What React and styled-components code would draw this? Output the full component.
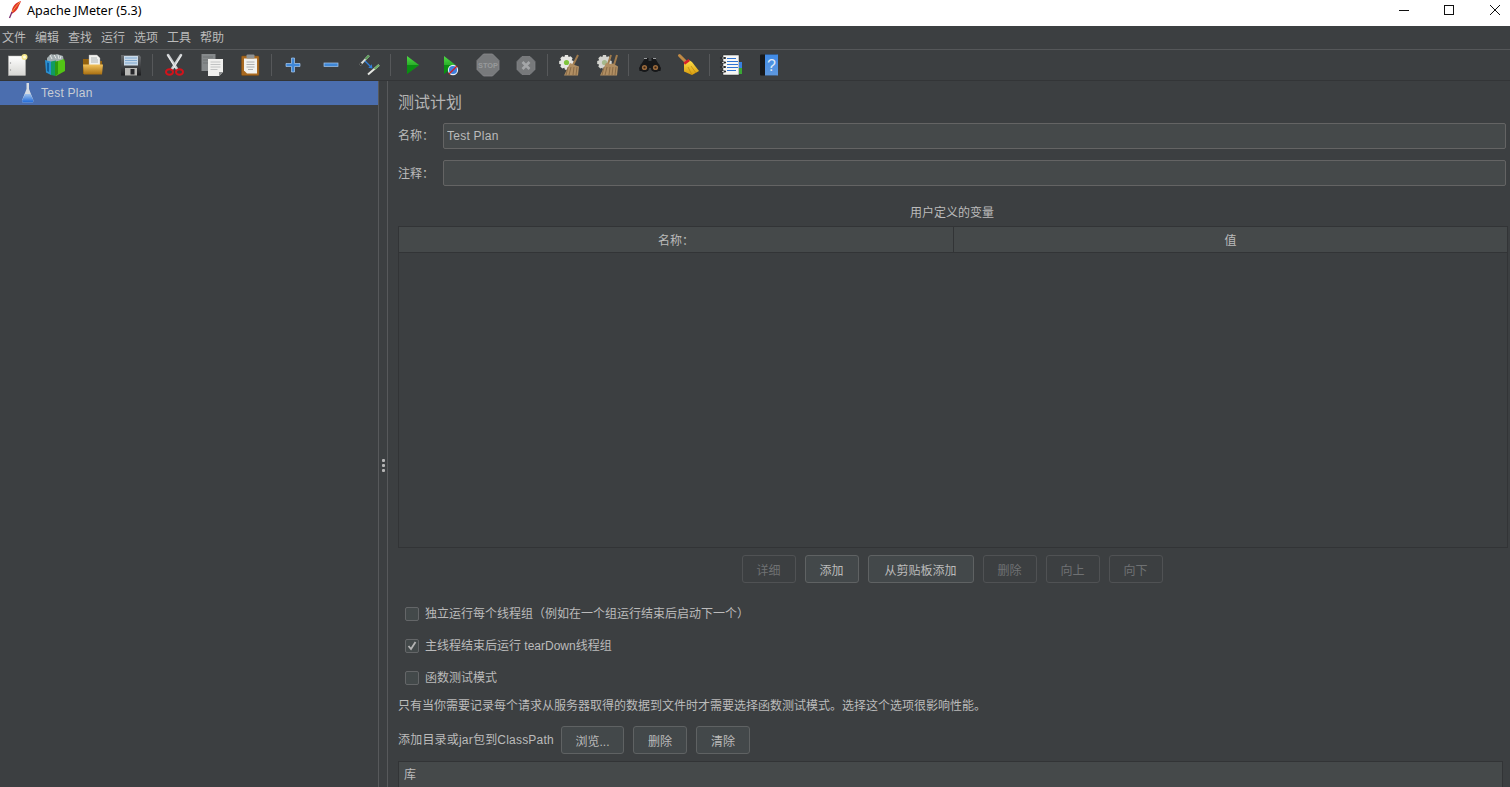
import React from "react";
import styled, { createGlobalStyle } from "styled-components";

const Global = createGlobalStyle`
  html, body { margin: 0; padding: 0; background: #3c3f41; overflow: hidden; }
  * { box-sizing: border-box; }
`;

const FONT = `"Liberation Sans", "Noto Sans CJK SC", sans-serif`;

const Frame = styled.div`
  width: 1510px; height: 787px; overflow: hidden;
  display: flex; flex-direction: column;
  background: #3c3f41; color: #bbbbbb;
  font: 12px/16px ${FONT};
`;
const TitleBar = styled.header`
  height: 26px; flex: none; background: #fff; color: #000;
  display: flex; align-items: center; padding: 0 10px 0 8px;
`;
const AppTitle = styled.span`
  font: 12.6px/16px "Noto Sans", sans-serif; margin-left: 5px; flex: 1; margin-top: -4px;
`;
const WindowControls = styled.div`
  display: flex; gap: 35px; margin-top: -6px;
  svg { display: block; }
  svg:nth-child(2) { margin-right: 1px; }
`;
const MenuBar = styled.nav`
  height: 24px; flex: none; display: flex; align-items: center; gap: 9px;
  padding: 1px 0 0 2px; border-bottom: 1px solid #555759;
`;
const MenuItem = styled.span`
  width: 24px; white-space: nowrap;
`;
const ToolBar = styled.div`
  height: 31px; flex: none; display: flex; align-items: center; gap: 4px;
  border-bottom: 1px solid #333537;
`;
const ToolButton = styled.button`
  width: 34px; height: 30px; flex: none; padding: 0; border: 0; background: none;
  display: flex; align-items: center; justify-content: center;
`;
const ToolSep = styled.span`
  width: 1px; height: 22px; flex: none; background: #56585a;
`;
const Split = styled.main`
  flex: 1; min-height: 0; display: flex;
`;
const TreePane = styled.aside`
  width: 378px; flex: none;
`;
const TreeRow = styled.div`
  height: 24px; background: #4b6eaf; display: flex; align-items: center;
  padding-left: 20px; gap: 5px; color: #c8cdd4; letter-spacing: 0.25px;
`;
const Divider = styled.div`
  width: 10px; flex: none; border-left: 1px solid #57595b; border-right: 1px solid #57595b;
  display: flex; flex-direction: column; align-items: center; gap: 2px; padding-top: 378px;
`;
const GripDot = styled.i`
  width: 3px; height: 3px; background: #b5b5b5; border-radius: 1px; display: block; margin-left: 1px;
`;
const EditorPane = styled.section`
  flex: 1; min-width: 0; padding: 12px 2px 0 10px; display: flex; flex-direction: column;
  & > * { flex: none; }
`;
const Heading = styled.h1`
  margin: 0; font: 400 16px/20px ${FONT}; color: #b4b4b4;
`;
const FieldRow = styled.label`
  display: flex; align-items: center; height: 26px; margin-top: ${p => p.$top}px; padding-right: 2px;
`;
const FieldLabel = styled.span`
  width: 45px; flex: none; white-space: nowrap; padding-top: ${p => p.$drop || 0}px;
`;
const TextInput = styled.input`
  flex: 1; min-width: 0; height: 26px; padding: 0 3px; background: #45494a;
  border: 1px solid #646464; border-radius: 2px; color: #bbbbbb; font: 12px ${FONT};
  letter-spacing: 0.25px; outline: none;
`;
const TableCaption = styled.div`
  margin-top: 19px; height: 16px; text-align: center; padding-right: 2px;
`;
const VarTable = styled.div`
  margin-top: 5px; height: 322px; display: flex; flex-direction: column;
  border: 1px solid #323436;
`;
const HeaderRow = styled.div`
  height: 26px; flex: none; display: grid; grid-template-columns: 554px 1fr;
  background: #45494a; border-bottom: 1px solid #323436;
`;
const HeaderCell = styled.div`
  display: flex; align-items: center; justify-content: center; padding-top: 2px;
  & + & { border-left: 1px solid #323436; }
`;
const ButtonRow = styled.div`
  display: flex; justify-content: center; gap: 9px; margin-top: 7px; padding-right: 2px;
`;
const Action = styled.button`
  width: ${p => p.$w || 54}px; height: 28px; flex: none; padding: 0;
  font: 12px ${FONT}; border-radius: 3px;
  color: #bbbbbb; background: #43484a; border: 1px solid #5f6263;
  &:disabled { color: #6f7173; background: transparent; border-color: #505254; }
`;
const Options = styled.div`
  margin-top: 15px; display: flex; flex-direction: column;
`;
const OptionRow = styled.label`
  height: 32px; display: flex; align-items: center; gap: 6px; padding-left: 7px;
`;
const CheckBox = styled.span`
  width: 14px; height: 14px; flex: none; border: 1px solid #646668; border-radius: 2px;
  background: #43494a; display: flex; align-items: center; justify-content: center;
`;
const HelpText = styled.p`
  margin: 0; height: 24px; line-height: 24px; white-space: nowrap;
`;
const ClassRow = styled.div`
  display: flex; align-items: center; gap: 9px; margin-top: 8px;
`;
const ClassLabel = styled.span`
  width: 154px; flex: none; white-space: nowrap; letter-spacing: 0.2px;
`;
const LibraryTable = styled.div`
  margin: 7px 5px 0 0; height: 40px; padding: 5px; background: #45494a;
  border: 1px solid #323436;
`;

const Svg = ({ children, size = 24 }) => (
  <svg width={size} height={size} viewBox={`0 0 ${size} ${size}`}>{children}</svg>
);

const Grad = ({ id, a, b, horiz }) => (
  <linearGradient id={id} x1="0" y1="0" x2={horiz ? 1 : 0} y2={horiz ? 0 : 1}>
    <stop offset="0" stopColor={a} /><stop offset="1" stopColor={b} />
  </linearGradient>
);

const NewIcon = () => <Svg>
  <Grad id="nw" a="#ffffff" b="#d6d6d2" />
  <rect x="3.500" y="3" width="17" height="19.500" fill="url(#nw)" stroke="#b8b8b4" strokeWidth=".5" />
  <circle cx="5.500" cy="10" r=".7" fill="#999" /><circle cx="5.500" cy="17" r=".7" fill="#999" />
  <circle cx="19.500" cy="4" r="3" fill="#f4e68a" /><circle cx="19.500" cy="4" r="1.500" fill="#fffde0" />
</Svg>;

const TemplatesIcon = () => <Svg>
  <path d="M4 5l4-4 3 1 3-1 3 1 3 1 1 6H4z" fill="#a2adb0" />
  <path d="M7 2l2 4M11 1.500l2 4M15 2l1 4M18 3l-1 3" stroke="#e4e8e8" strokeWidth="1" />
  <path d="M2 7l6 1.500V22l-5-2.500z" fill="#2a8fd0" />
  <path d="M4 9.500l2 .5v9l-2-1z" fill="#0f5d9c" />
  <path d="M8 8.500l5-1V23l-5-1z" fill="#119a62" />
  <path d="M12 9l9-3 1 3v9l-9 5z" fill="#53c415" />
  <path d="M12 9l3-1v13l-3 2z" fill="#2d9810" />
</Svg>;

const OpenIcon = () => <Svg>
  <Grad id="fo" a="#f2c25b" b="#a86f12" />
  <path d="M2 6h6l2 2h11v13H2z" fill="#93620f" />
  <path d="M8 2h8l3 3v8H8z" fill="#f1f1ee" stroke="#aaa" strokeWidth=".4" />
  <path d="M10 5h6M10 7h7M10 9h7" stroke="#9da3a5" strokeWidth=".8" />
  <path d="M2 11.500h20l-1 10H3z" fill="url(#fo)" />
</Svg>;

const SaveIcon = () => <Svg>
  <Grad id="fl" a="#6a6d70" b="#1d1e20" />
  <path d="M2 2h18l2 2v18.500H2z" fill="url(#fl)" />
  <rect x="5" y="3" width="14" height="9.500" fill="#c9d9e8" />
  <path d="M6 5h12M6 7.500h12M6 10h12" stroke="#7fa8cf" strokeWidth="1" />
  <rect x="6" y="15" width="12" height="7.500" fill="#b9b9b6" />
  <rect x="11.500" y="16" width="4" height="5.500" fill="#26272a" />
</Svg>;

const CutIcon = () => <Svg>
  <path d="M6 2l9 14M19 2l-9 14" stroke="#c9ccce" strokeWidth="2.600" strokeLinecap="round" fill="none" />
  <path d="M5.600 2.200l8 13" stroke="#f2f2f2" strokeWidth=".9" />
  <path d="M19.400 2.200l-8 13" stroke="#f2f2f2" strokeWidth=".9" />
  <ellipse cx="7.500" cy="19" rx="3.500" ry="2.800" fill="none" stroke="#d3131b" strokeWidth="2" />
  <ellipse cx="17.500" cy="19" rx="3.500" ry="2.800" fill="none" stroke="#d3131b" strokeWidth="2" />
</Svg>;

const CopyIcon = () => <Svg>
  <rect x="1.500" y="1" width="14" height="17" fill="#85898b" />
  <path d="M3 4h10M3 7h10M3 10h10" stroke="#6a6e70" strokeWidth=".8" />
  <path d="M8 6h15v13l-4 4H8z" fill="#f0f0ee" />
  <path d="M10.500 9h10M10.500 11.500h10M10.500 14h10M10.500 16.500h7" stroke="#b5b7b8" strokeWidth=".8" />
  <path d="M23 19l-4 4v-4z" fill="#8d8f90" />
</Svg>;

const PasteIcon = () => <Svg>
  <rect x="3.500" y="3" width="17.500" height="19.500" rx="1" fill="#a9691f" stroke="#7d4c12" strokeWidth=".5" />
  <path d="M6 5.500h13v15H9l-3-3z" fill="#f1f1ee" />
  <path d="M8.500 9h8M8.500 11.500h8M8.500 14h8M10 16.500h5" stroke="#9d9f9f" strokeWidth=".8" />
  <rect x="8.500" y="1.500" width="8" height="4" rx="1" fill="#8e9294" />
</Svg>;

const PlusIcon = () => <Svg>
  <path d="M10.500 5h3v5.500H19v3h-5.500V19h-3v-5.500H5v-3h5.500z" fill="#3f87d6" stroke="#a9c9ee" strokeWidth=".7" />
</Svg>;

const MinusIcon = () => <Svg>
  <rect x="5" y="10" width="14" height="3.500" fill="#3f87d6" stroke="#a9c9ee" strokeWidth=".7" />
</Svg>;

const ToggleIcon = () => <Svg>
  <path d="M3 12l9-9.500" stroke="#d9dcd8" strokeWidth="2" />
  <path d="M8.500 6.200l3.500-3.700" stroke="#5f9f5c" strokeWidth="2" />
  <path d="M3 12l1.500-1.600" stroke="#2c2e2c" strokeWidth="2" />
  <path d="M11 21.500l11-9.500" stroke="#e4e6e2" strokeWidth="2" />
  <path d="M17.500 15.900l4.500-3.900" stroke="#6fae63" strokeWidth="2" />
  <path d="M8 8l5 5" stroke="#2f7fdc" strokeWidth="1.200" />
  <path d="M15.500 15.500l-4.200-.8 3.400-3.400z" fill="#2f7fdc" />
</Svg>;

const StartIcon = ({ id = "go" }) => <Grad id={id} a="#4fdc45" b="#07800f" />;

const RunIcon = () => <Svg>
  <StartIcon id="go" />
  <path d="M7 3l12 9-12 9z" fill="url(#go)" />
  <path d="M7 12h12L7 21z" fill="#0a8e12" />
</Svg>;

const RunNoPauseIcon = () => <Svg>
  <StartIcon id="go2" />
  <path d="M6 3l11.500 9L6 21z" fill="url(#go2)" />
  <path d="M6 12h11.500L6 21z" fill="#0a8e12" />
  <circle cx="15" cy="17" r="4.600" fill="#3d7fdc" stroke="#e8eef6" strokeWidth="1.100" />
  <path d="M11 21l8-8" stroke="#d81d1d" strokeWidth="1.200" />
</Svg>;

const StopIcon = () => <Svg>
  <path d="M7.500 1h9L23 7.500v9L16.500 23h-9L1 16.500v-9z" fill="#787a7c" stroke="#8a8c8e" strokeWidth=".8" />
  <text x="12" y="14.600" textAnchor="middle" fontFamily="Liberation Sans" fontWeight="700" fontSize="7.400" fill="#97999b">STOP</text>
</Svg>;

const ShutdownIcon = () => <Svg>
  <path d="M8 3.500h8L21 8.500v8L16 21.500H8L3 16.500v-8z" fill="#77797b" stroke="#85878a" strokeWidth=".7" />
  <path d="M8.500 9l7 7M15.500 9l-7 7" stroke="#a4a6a8" strokeWidth="2.600" />
</Svg>;

const Gear = ({ dim }) => <>
  <path d="M8 2h3l.6 2 2-.8 2 2-.9 2 2 .7v3l-2 .7.9 2-2 2-2-.9-.6 2H8l-.7-2-2 .9-2-2 .9-2-2-.7v-3l2-.7-.9-2 2-2 2 .8z"
    fill={dim ? "#d4d4cf" : "#e6e6e2"} />
  <circle cx="9.500" cy="9.500" r="2.600" fill={dim ? "#a5b98c" : "#7fc43c"} />
</>;

const ClearIcon = () => <Svg>
  <Gear />
  <path d="M21 2l-5 10" stroke="#a07b4c" strokeWidth="2" />
  <path d="M13 10l6 2.500 3 1-1 9H7z" fill="#b08e62" />
  <path d="M11 14l-2 8M14 14l-2 8M17 14l-1 8M20 14l-1 8" stroke="#7f6240" strokeWidth=".8" />
</Svg>;

const ClearAllIcon = () => <Svg>
  <Gear dim />
  <path d="M16 2l-3 9M22 2l-3 10" stroke="#a07b4c" strokeWidth="2" />
  <path d="M11 10l5 1 2-.5 5 3-1 9H5z" fill="#b08e62" />
  <path d="M9 14l-2 8M12 14l-2 8M15 14l-1 8M18 14l-1 8M21 14l-1 8" stroke="#7f6240" strokeWidth=".8" />
</Svg>;

const SearchIcon = () => <Svg>
  <path d="M7 5h3.500v3h3V5H17l3 5 3 5-.5 3H14l-1-3h-2l-1 3H1.500L1 15l3-5z" fill="#17181a" />
  <path d="M6 5.500h3M15 5.500h3" stroke="#9a9d9f" strokeWidth="1.200" />
  <circle cx="6.500" cy="14.500" r="4.500" fill="#17181a" /><circle cx="17.500" cy="14.500" r="4.500" fill="#17181a" />
  <circle cx="6.500" cy="14.500" r="2.600" fill="#9a6a3d" /><circle cx="17.500" cy="14.500" r="2.600" fill="#9a6a3d" />
  <circle cx="6.500" cy="14.500" r="1.100" fill="#3b2412" /><circle cx="17.500" cy="14.500" r="1.100" fill="#3b2412" />
</Svg>;

const BroomIcon = () => <Svg>
  <Grad id="br" a="#ffe14a" b="#d79a0c" />
  <path d="M3.500 2.500l6 6" stroke="#c08a45" strokeWidth="3" strokeLinecap="round" />
  <path d="M8 10.500l5-3.500 3 2 7 9-7 4-8-3.500z" fill="url(#br)" />
  <path d="M7.500 9.500l5-3.500 1.500 2-5 3.800z" fill="#d8202a" />
  <path d="M12 14l4 8M15 13l5 7" stroke="#b98510" strokeWidth=".7" />
</Svg>;

const LogIcon = () => <Svg>
  <rect x="4" y="2" width="16" height="20" fill="#f6f6f4" stroke="#26282a" strokeWidth=".5" />
  <rect x="20" y="9" width="3" height="6" fill="#3880e0" /><rect x="20" y="15" width="3" height="6" fill="#3aa835" />
  <path d="M8 5.500h9M8 8.500h11M8 11.500h11M8 14.500h11M8 17.500h9" stroke="#2e73d2" strokeWidth="1.200" />
  <path d="M2 5h4M2 9.500h4M2 14h4M2 18.500h4" stroke="#2c2e30" strokeWidth="2.200" strokeLinecap="round" />
  <path d="M3 5h2M3 9.500h2M3 14h2M3 18.500h2" stroke="#d5d5d5" strokeWidth=".8" />
</Svg>;

const HelpIcon = () => <Svg>
  <Grad id="hb" a="#3f8ae6" b="#5e98de" />
  <rect x="3" y="1.500" width="17" height="21" rx="1" fill="#17191b" />
  <rect x="8" y="1.500" width="13" height="21" fill="url(#hb)" />
  <text x="14.500" y="18" textAnchor="middle" fontFamily="Liberation Sans" fontSize="16" fill="#dfe9f6">?</text>
</Svg>;

const FlaskIcon = () => <svg width="16" height="20" viewBox="0 0 16 20">
  <Grad id="fk" a="#9fc2ee" b="#1d67d6" />
  <path d="M6.500 0h2.500v6l4.500 11.500-.5 2H2.500l-.5-2L6.500 6z" fill="#d6dbe2" />
  <path d="M5 11h5.500l3 6.500-.5 2H2.500l-.5-2z" fill="url(#fk)" />
</svg>;

const FeatherIcon = () => <svg width="14" height="18" viewBox="0 0 14 18" style={{ marginTop: -6 }}>
  <path d="M13 0C9 1 5 4 4 9c-.5 2-.5 3-.5 4 2-1 5-3 6.500-6 .4-1.500 2-4 3-7z" fill="#e0332b" />
  <path d="M12 1C9 4 6 8 4 11" stroke="#f5a33c" strokeWidth="1" fill="none" />
  <path d="M4 11L1.500 17" stroke="#7a2c6e" strokeWidth="1.300" />
</svg>;

const GROUPS = [
  [NewIcon, TemplatesIcon, OpenIcon, SaveIcon],
  [CutIcon, CopyIcon, PasteIcon],
  [PlusIcon, MinusIcon, ToggleIcon],
  [RunIcon, RunNoPauseIcon, StopIcon, ShutdownIcon],
  [ClearIcon, ClearAllIcon],
  [SearchIcon, BroomIcon],
  [LogIcon, HelpIcon],
];
const MENUS = ["文件", "编辑", "查找", "运行", "选项", "工具", "帮助"];
const ACTIONS = [
  { t: "详细", off: true }, { t: "添加" }, { t: "从剪贴板添加", w: 106 },
  { t: "删除", off: true }, { t: "向上", off: true }, { t: "向下", off: true },
];
const OPTIONS = [
  { t: "独立运行每个线程组（例如在一个组运行结束后启动下一个）" },
  { t: "主线程结束后运行 tearDown线程组", on: true },
  { t: "函数测试模式" },
];

export default function App() {
  return (
    <Frame>
      <Global />
      <TitleBar>
        <FeatherIcon />
        <AppTitle>Apache JMeter (5.3)</AppTitle>
        <WindowControls>
          <svg width="10" height="10"><path d="M0 5.500h10" stroke="#111" /></svg>
          <svg width="10" height="10"><rect x=".5" y=".5" width="9" height="9" fill="none" stroke="#111" /></svg>
          <svg width="10" height="10"><path d="M0 0l10 10M10 0L0 10" stroke="#111" /></svg>
        </WindowControls>
      </TitleBar>
      <MenuBar>{MENUS.map(m => <MenuItem key={m}>{m}</MenuItem>)}</MenuBar>
      <ToolBar>
        {GROUPS.map((g, i) => (
          <React.Fragment key={i}>
            {i > 0 && <ToolSep />}
            {g.map((Icon, j) => <ToolButton key={j}><Icon /></ToolButton>)}
          </React.Fragment>
        ))}
      </ToolBar>
      <Split>
        <TreePane>
          <TreeRow><FlaskIcon />Test Plan</TreeRow>
        </TreePane>
        <Divider><GripDot /><GripDot /><GripDot /></Divider>
        <EditorPane>
          <Heading>测试计划</Heading>
          <FieldRow $top={10}><FieldLabel>名称：</FieldLabel><TextInput readOnly value="Test Plan" /></FieldRow>
          <FieldRow $top={11}><FieldLabel $drop={2}>注释：</FieldLabel><TextInput readOnly value="" /></FieldRow>
          <TableCaption>用户定义的变量</TableCaption>
          <VarTable>
            <HeaderRow><HeaderCell>名称：</HeaderCell><HeaderCell>值</HeaderCell></HeaderRow>
          </VarTable>
          <ButtonRow>
            {ACTIONS.map(a => <Action key={a.t} $w={a.w} disabled={a.off}>{a.t}</Action>)}
          </ButtonRow>
          <Options>
            {OPTIONS.map(o => (
              <OptionRow key={o.t}>
                <CheckBox>
                  {o.on && <svg width="10" height="10"><path d="M1.500 5l2.500 3 4.500-7" fill="none" stroke="#b5b5b5" strokeWidth="1.800" /></svg>}
                </CheckBox>
                {o.t}
              </OptionRow>
            ))}
          </Options>
          <HelpText>只有当你需要记录每个请求从服务器取得的数据到文件时才需要选择函数测试模式。选择这个选项很影响性能。</HelpText>
          <ClassRow>
            <ClassLabel>添加目录或jar包到ClassPath</ClassLabel>
            <Action $w={63}>浏览...</Action>
            <Action>删除</Action>
            <Action>清除</Action>
          </ClassRow>
          <LibraryTable>库</LibraryTable>
        </EditorPane>
      </Split>
    </Frame>
  );
}
